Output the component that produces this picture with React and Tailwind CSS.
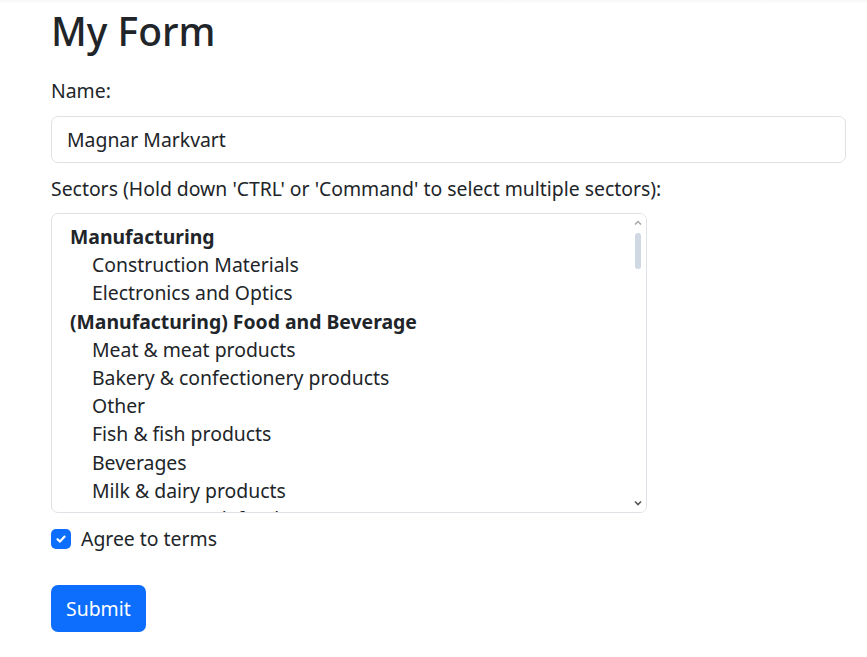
import { useState } from "react";

const sectors = [
  { label: "Manufacturing", group: true },
  { label: "Construction Materials" },
  { label: "Electronics and Optics" },
  { label: "(Manufacturing) Food and Beverage", group: true },
  { label: "Meat & meat products" },
  { label: "Bakery & confectionery products" },
  { label: "Other" },
  { label: "Fish & fish products" },
  { label: "Beverages" },
  { label: "Milk & dairy products" },
  { label: "Sweets & snack food" },
];

export default function App() {
  const [name, setName] = useState("Magnar Markvart");
  const [agree, setAgree] = useState(true);

  return (
    <div className="min-h-screen bg-white text-[#212529] text-[19.4px] leading-[30px] font-['Segoe_UI','Noto_Sans',sans-serif]">
      <div className="h-[4px] bg-gradient-to-b from-[#f7f7f7] to-white" />
      <form className="pl-[51px] w-[846px] pt-[3px]">
        <h1 className="text-[39px] leading-[48px] font-medium mb-[21px]">My Form</h1>

        <label className="block mb-[10px]">Name:</label>
        <input
          value={name}
          onChange={(e) => setName(e.target.value)}
          className="block w-full h-[47px] px-[15px] border border-[#dee2e6] rounded-[7px] outline-none mb-[11px]"
        />

        <label className="block mb-[9px]">
          Sectors (Hold down 'CTRL' or 'Command' to select multiple sectors):
        </label>
        <div className="relative w-[596px] h-[300px] border border-[#dee2e6] rounded-[7px] overflow-hidden mb-[11px]">
          <div className="pt-[9px] pl-[18px] leading-[28.2px]">
            {sectors.map((s, i) =>
              s.group ? (
                <div key={i} className="font-bold">{s.label}</div>
              ) : (
                <div key={i} className="pl-[22px]">{s.label}</div>
              )
            )}
          </div>
          {/* scrollbar */}
          <div className="absolute right-0 top-0 bottom-0 w-[16px] bg-white flex flex-col items-center">
            <svg width="8" height="6" viewBox="0 0 8 6" className="mt-[6px]">
              <path d="M1 4.5 L4 1.5 L7 4.5" stroke="#a3a3a3" strokeWidth="1.4" fill="none" />
            </svg>
            <div className="w-[6px] h-[36px] rounded-full bg-[#cfd8e3] mt-[7px]" />
            <div className="flex-1" />
            <svg width="8" height="6" viewBox="0 0 8 6" className="mb-[6px]">
              <path d="M1 1.5 L4 4.5 L7 1.5" stroke="#555" strokeWidth="1.6" fill="none" />
            </svg>
          </div>
        </div>

        <label className="flex items-center gap-[10px] mb-[31px]">
          <span
            onClick={() => setAgree(!agree)}
            className={`w-[20px] h-[20px] rounded-[5px] flex items-center justify-center ${agree ? "bg-[#0d6efd]" : "border border-[#dee2e6] bg-white"}`}
          >
            {agree && (
              <svg width="12" height="12" viewBox="0 0 12 12">
                <path d="M2.5 6.2 L5 8.6 L9.6 3.6" stroke="white" strokeWidth="2.2" fill="none" strokeLinecap="round" strokeLinejoin="round" />
              </svg>
            )}
          </span>
          <span>Agree to terms</span>
        </label>

        <button type="button" className="h-[47px] px-[15px] bg-[#0d6efd] text-white rounded-[7px]">
          Submit
        </button>
      </form>
    </div>
  );
}
